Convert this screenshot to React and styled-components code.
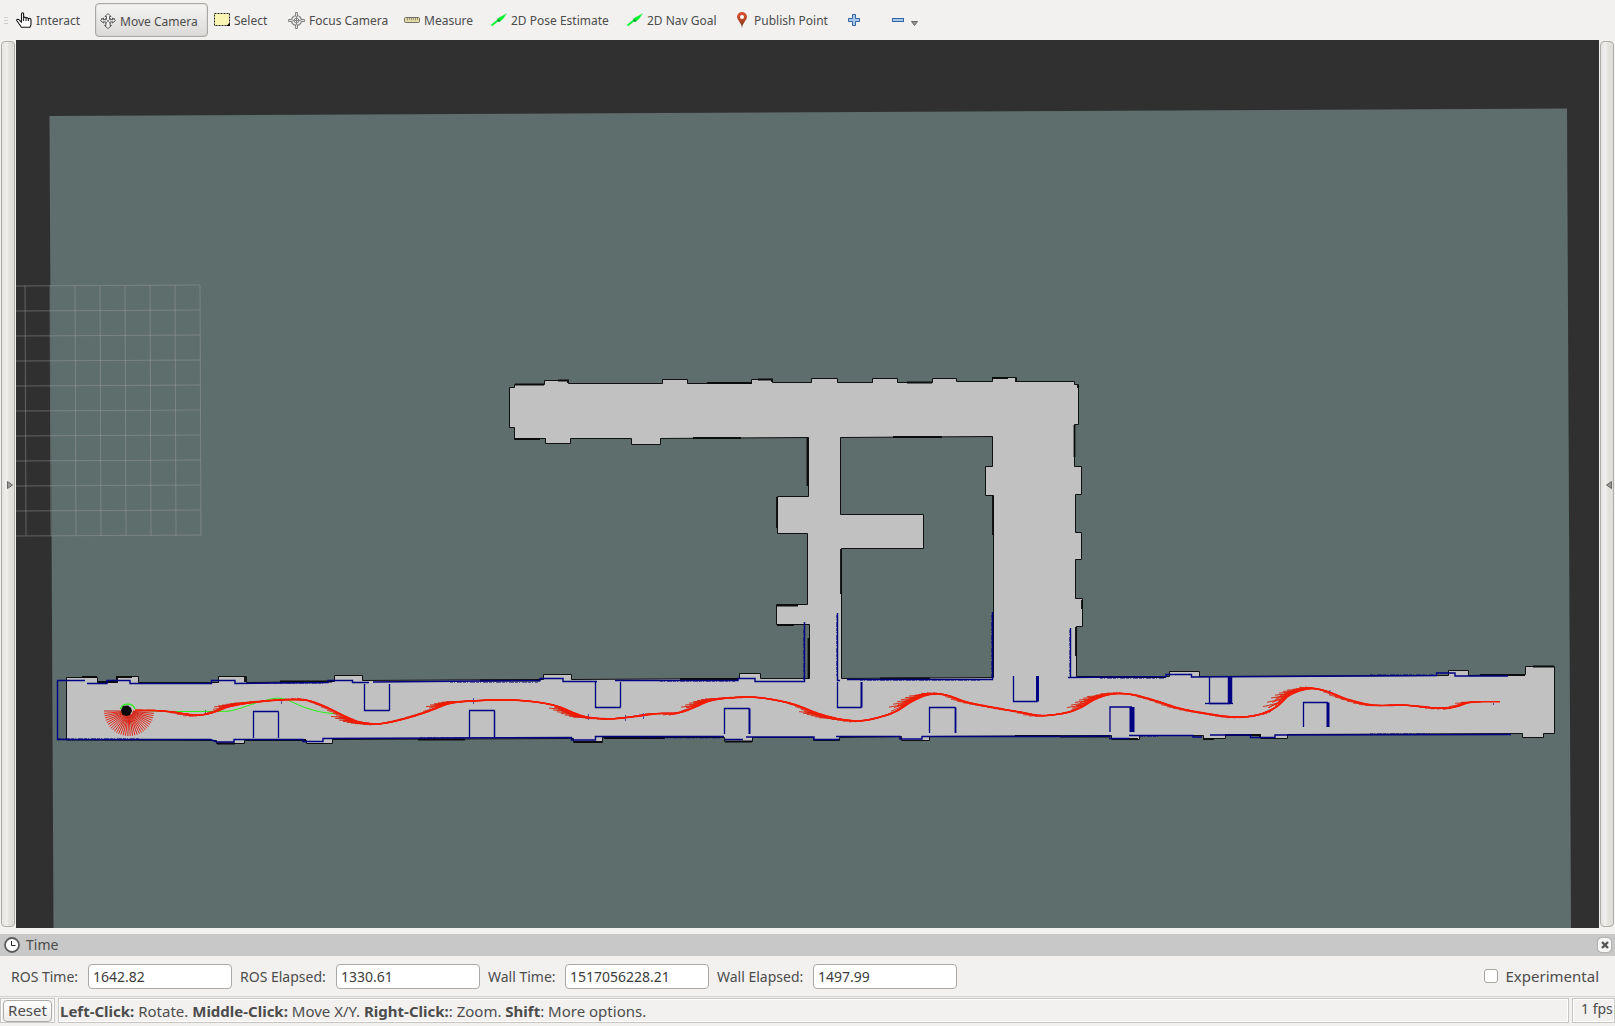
import React from "react";
import styled, { createGlobalStyle, css } from "styled-components";

const GlobalStyle = createGlobalStyle`
  *, *::before, *::after { box-sizing: border-box; }
  body {
    margin: 0;
    background: #f2f1f0;
    color: #4c4c4c;
    font-family: "Noto Sans", "Open Sans", sans-serif;
    overflow: hidden;
  }
  button, input { font: inherit; color: inherit; }
`;

const Window = styled.div`
  display: flex;
  flex-direction: column;
  height: 100vh;
`;

/* ---------- toolbar ---------- */

const Toolbar = styled.header`
  display: flex;
  align-items: center;
  height: 40px;
  flex: none;
  font-size: 12px;
`;

const Grip = styled.span`
  display: flex;
  flex-direction: column;
  gap: 2px;
  width: 11px;
  padding-left: 4px;
  &::before, &::after { content: ""; }
  i, &::before, &::after {
    width: 4px;
    height: 1px;
    background: #cfcdca;
  }
`;

const ToolButton = styled.button`
  display: flex;
  align-items: center;
  gap: 4px;
  flex: none;
  width: ${(p) => p.$width}px;
  height: 34px;
  padding: 0 4px;
  border: 1px solid transparent;
  border-radius: 4px;
  background: none;
  white-space: nowrap;
  text-align: left;
  svg { flex: none; }
  ${(p) =>
    p.$pressed &&
    css`
      padding-top: 2px;
      margin-right: 1px;
      border-color: #a9a7a2;
      background: linear-gradient(#f5f5f4, #dbdad8);
      box-shadow: inset 0 0 2px #c4c2be;
    `}
`;

/* ---------- viewport ---------- */

const Workspace = styled.main`
  display: flex;
  flex: 1;
  min-height: 0;
`;

const PanelHandle = styled.button`
  display: flex;
  align-items: center;
  justify-content: flex-end;
  flex: none;
  width: 14px;
  margin: 1px;
  padding: 2px 1px 0;
  border: 1px solid #aeaca6;
  border-radius: 4px;
  background: linear-gradient(90deg, #e4e3e1, #f0efed 40%, #e2e1db 60%, #dfded8);
`;

const Viewport = styled.div`
  flex: 1;
  min-width: 0;
  background: #303030;
  svg { display: block; width: 100%; height: 100%; }
`;

/* ---------- time dock ---------- */

const Dock = styled.section`
  flex: none;
  margin-top: 6px;
`;

const DockTitle = styled.div`
  display: flex;
  align-items: center;
  gap: 6px;
  height: 22px;
  padding: 0 4px;
  background: #c8c8c8;
  h2 { flex: 1; margin: 0; font-size: 14px; font-weight: 400; line-height: 22px; }
`;

const CloseButton = styled.button`
  display: flex;
  align-items: center;
  justify-content: center;
  width: 13px;
  height: 14px;
  padding: 0;
  border: 1px solid #fafafa;
  border-radius: 4px;
  background: #f4f4f3;
  box-shadow: 0 0 1px 1px #b0aeab;
`;

const Fields = styled.div`
  display: flex;
  align-items: center;
  gap: 8px;
  height: 40px;
  padding: 0 16px 0 11px;
  font-size: 14px;
`;

const Label = styled.label`
  flex: none;
  width: ${(p) => p.$width}px;
  white-space: nowrap;
`;

const Field = styled.input`
  width: 144px;
  height: 25px;
  padding: 0 4px;
  border: 1px solid #aba9a4;
  border-radius: 4px;
  background: #fff;
  color: #3c3c3c;
  font-size: 14px;
`;

const CheckLabel = styled.label`
  display: flex;
  align-items: center;
  gap: 8px;
  margin-left: auto;
  font-size: 15px;
`;

const Check = styled.input`
  appearance: none;
  width: 14px;
  height: 14px;
  margin: 0;
  border: 1px solid #a5a39e;
  border-radius: 3px;
  background: #fff;
`;

/* ---------- status bar ---------- */

const StatusBar = styled.footer`
  display: flex;
  gap: 3px;
  flex: none;
  height: 30px;
  padding: 1px 0 3px;
  border-top: 1px solid #d3d1ce;
  font-size: 15px;
`;

const Cell = styled.div`
  display: flex;
  align-items: center;
  flex: ${(p) => (p.$grow ? "1" : "none")};
  min-width: 0;
  border: 1px solid #c8c6c3;
  box-shadow: inset -1px -1px #fff, inset 1px 1px #fff;
  padding: ${(p) => (p.$grow ? "0 1px" : "0 2px")};
  white-space: nowrap;
  overflow: hidden;
  p { margin: 0; }
`;

const Fps = styled(Cell)`
  width: 43px;
  align-items: flex-start;
  padding: 0 0 0 8px;
  font-size: 14px;
  line-height: 19px;
`;

const ResetButton = styled.button`
  width: 49px;
  height: 22px;
  padding: 0;
  border: 1px solid #aeaca8;
  border-radius: 4px;
  background: linear-gradient(#fff, #ecebe9);
  line-height: 19px;
`;

/* ---------- icons ---------- */

const Icon = ({ children, w = 16, h = 16 }) => (
  <svg width={w} height={h} viewBox={`0 0 ${w} ${h}`} aria-hidden="true">
    {children}
  </svg>
);

const HandIcon = () => (
  <Icon>
    <path
      d="M5.5 9V2.2Q5.5.8 6.6.8T7.6 2.2V6Q8 5 9 5.2T10 6.4Q10.5 5.4 11.4 5.7T12.3 7Q13 6 14 6.4T15 8V12.5L14 15.2H5.5L3.2 12 .9 8.8Q.3 7.4 1.8 7.2 3 7.2 4 8.8L5.5 10Z"
      fill="#fff" stroke="#161616" strokeWidth="1.1"
    />
    <path d="M7.6 6V9M10 6.5V9M12.4 7V9" stroke="#161616" fill="none" />
  </Icon>
);

const MoveIcon = () => (
  <Icon>
    <path
      d="M8 .5 11 3.5H9.5V6L12.5 7V5L15.5 7.5 12.5 10V8.8L10 9V12.5H11.5L8 15.5 4.5 12.5H6V9L3.5 8.8V10L.5 7.5 3.5 5V7L6.5 6V3.5H5Z"
      fill="#f4f4f4" stroke="#555" strokeWidth="1"
    />
    <path d="M1 5.5 6 7M15 5.5 10 7M5 5 8 8 11 5M5 11 8 8 11 11" fill="none" stroke="#666" strokeWidth=".8" />
  </Icon>
);

const SelectIcon = () => (
  <Icon>
    <rect x=".5" y="1.5" width="15" height="12" fill="#fbf5b4" stroke="#222" strokeDasharray="2 1" />
    <path d="M15.8 10.5V14H12.5Z" fill="#000" />
  </Icon>
);

const FocusIcon = () => (
  <Icon w={17} h={17}>
    <g fill="none" stroke="#858585">
      <circle cx="8.5" cy="8.5" r="5" strokeWidth="1.2" />
      <circle cx="8.5" cy="8.5" r="2.4" />
      <path d="M8.5 5V12M5 8.5H12" />
      <path d="M7.5.5H9.5V4L8.5 5 7.5 4ZM7.5 16.5H9.5V13L8.5 12 7.5 13ZM.5 7.5V9.5H4L5 8.5 4 7.5ZM16.5 7.5V9.5H13L12 8.5 13 7.5Z" fill="#ddd" />
    </g>
  </Icon>
);

const RulerIcon = () => (
  <Icon>
    <rect x=".5" y="5.5" width="15" height="5" rx="1" fill="#e4dca6" stroke="#716d62" />
    <path d="M3.5 6V8.5M5.5 6V8M7.5 6V8.5M9.5 6V8M11.5 6V8.5M13.5 6V8" stroke="#85806c" strokeWidth=".8" />
  </Icon>
);

const ArrowIcon = () => (
  <Icon>
    <path d="M.5 13.5 7 8.2" stroke="#00f32c" strokeWidth="1.8" />
    <path d="M16 1.2 12 7 8.5 9.8 6.4 6.6Z" fill="#00f32c" />
    <path d="M6 6.5 10 9.2 7.2 9.8Z" fill="#078a1b" />
  </Icon>
);

const PinIcon = () => (
  <Icon w={14}>
    <defs>
      <linearGradient id="pin" x1="0" y1="0" x2="0" y2="1">
        <stop offset="0" stopColor="#df4e30" />
        <stop offset=".55" stopColor="#b34526" />
        <stop offset="1" stopColor="#4c3016" />
      </linearGradient>
    </defs>
    <path d="M6 16Q6 13 3.5 10T1 5A5 5 0 0 1 11 5Q11 7 8.500 10T6 16Z" fill="url(#pin)" />
    <circle cx="6" cy="5" r="2" fill="#fff" />
  </Icon>
);

const PlusIcon = () => (
  <Icon w={12} h={12}>
    <path d="M4.5.5H7.5V4.5H11.5V7.5H7.5V11.5H4.5V7.5H.5V4.5H4.5Z" fill="#a9c8ec" stroke="#3465a4" />
  </Icon>
);

const MinusIcon = () => (
  <Icon w={27} h={12}>
    <rect x=".5" y="4.5" width="11" height="3" fill="#a9c8ec" stroke="#3465a4" />
    <path d="M19.5 7.5H25.5L22.5 11.5Z" fill="#999" stroke="#666" />
  </Icon>
);

const ClockIcon = () => (
  <Icon>
    <circle cx="8" cy="8" r="7" fill="#fff" stroke="#5c5c5c" strokeWidth="1.8" />
    <path d="M7.5 4V8.5H11.5" fill="none" stroke="#222" />
  </Icon>
);

const TOOLS = [
  { name: "Interact", icon: HandIcon, width: 84 },
  { name: "Move Camera", icon: MoveIcon, width: 113, pressed: true },
  { name: "Select", icon: SelectIcon, width: 74 },
  { name: "Focus Camera", icon: FocusIcon, width: 116 },
  { name: "Measure", icon: RulerIcon, width: 87 },
  { name: "2D Pose Estimate", icon: ArrowIcon, width: 136 },
  { name: "2D Nav Goal", icon: ArrowIcon, width: 109 },
  { name: "Publish Point", icon: PinIcon, width: 112 },
  { label: "Add tool", icon: PlusIcon, width: 44 },
  { label: "Remove tool", icon: MinusIcon, width: 37 },
];

/* ---------- map scene ---------- */

const FLOOR =
  "M66.5 740V677.5H97.5V682.5H116.5V676.5H138.5V682.5H218.5V676.5H246.5V682.5L334.5 681.5V675.5H362.5V680.5L543.5 679.5V674.5H571.5V679.5L739.5 678.5V673.5H760.5V678.5H809.5V624.5H776.5V604.5H807.5V533.5H777.5V496.5H808.5V437.5L660.5 438.5V444.5H631.5V438.5H570.5V443.5H545.5V438.5H514.5V427.5H509.5V387.5H514.5V384.5H544.5V380.5H568.5V383.5H662.5V379.5H687.5V383.5H751.5V379.5H772.5V382.5H811.5V378.5H837.5V382.5H872.5V378.5H897.5V382.5H932.5V378.5H956.5V381.5H992.5V377.5H1016.5V381.5H1074.5V384.5H1078.5V424.5H1074.5V466.5H1081.5V494.5H1075.5V532.5H1081.5V559.5H1075.5V598.5H1082.5V626.5H1076.5V676.5H1169.5V671.5H1199.5V676.5L1448.5 675.5V670.5H1468.5V675.5L1525.5 674.5V666.5H1554.5V733.5H1543.5V737.5H1522.5V733.5L1287.5 734.5V738.5H1260.5V734.5H1225.5V738.5H1203.5V735.5H1139.5V739.5H1111.5V735.5L929.5 736.5V740.5H901.5V736.5L839.5 737.5V740.5H813.5V737.5H752.5V741.5H724.5V737.5H602.5V742.5H573.5V738.5L332.5 739.5V743.5H306.5V740.5H244.5V743.5H216.5V740.5Z" +
  "M840.5 437.5 992.5 436.5V466.5H985.5V495.5H993.5V677.5L841.5 678.5V548.5H923.5V514.5H840.5Z";

const THICK_WALLS =
  "M82 677H97M98 682H117V677H132M245 677V682M280 681.5H332M480 680.5H540M680 679H738M808.5 638V678M777 605.5H798M777 625H794M777 497V528M807.5 438V486M693 438H741M893 437H942M514 439H540M515 384.5H544M558 380.5H568V383M707 383H752M758 379.5H772V382M907 382.5H932M992 378H1008M1016 378V382M1074.5 425V457M1078 385V388M993 496V535M841 549V594M1082 600V609M1076 627V656M1080 677H1166M1480 675H1525M1533 666.5H1554M1112 739H1138M1060 736.5H1110M604 738H665M574 742H602M725 741.5H752M245 740H306M418 739.5H465M217 743.5H235M1015 736H1060M1225 735H1260V738M880 678.5H930M1203 739H1214";

const SCANS =
  "M85 680.5H57.5V739.5H210.5L217 742H234V739.5H303V741.5H323V738.5L571.5 737.5V740H595.5V736.5H724M725 739.5H743M746 737H814V739.5H839M836 736.5H900V739H922V736.5H1060L1111 736M1109 738.5H1129M1129 735.5H1193V737H1202M1210 735H1250.5V737.5H1275V735L1511 734.5" +
  "M87 683.5H107V680.5H130V683.5H211.5V680.5H235V683.5L328 682.5V680.5H352.5V682.5H369M373 682 540 680.5V678.5H563V681.5H597M615 680.5H738V678.5H755V681.5H804.5V622M837.5 613V680.5H840M847 679.5H992.5V612M1070.5 628V677.5M1068 677.5 1166 676.5V674.5H1191.5V677L1436.5 675.5V673H1455V676H1508";

const SCAN_NOISE =
  "M58 738.500H140M240 683.5H325M450 682.5H538M660 681.5H735M803.500 630V680M836.500 615V676M991.500 615V678M1069.500 630V676M1100 678.5H1165M1370 674.5H1435M1370 733.5H1430M1140 736.5H1160M860 680.5H980M420 737.5H560M640 738H720";

// [left, right, closed edge y, open edge y, right wall thickness]
const OBSTACLES = [
  [253.5, 278.5, 711.5, 738, 1.3],
  [364.5, 389.5, 710.5, 684, 1.3],
  [469.5, 494.5, 710.5, 737, 1.5],
  [595.5, 620.5, 707.5, 682, 1.3],
  [724.5, 749.5, 708.5, 734, 2],
  [837.5, 861.5, 707.5, 682, 2],
  [929.5, 955.5, 707.5, 733, 1.8],
  [1013.5, 1037.5, 701.5, 676, 3],
  [1110, 1132, 707, 732, 5],
  [1209.5, 1230, 703.5, 677, 4.5],
  [1303.5, 1328, 702.5, 727, 3],
];

const TRAIL = [
  [135, 710], [155, 710.5], [173, 712], [197, 715], [213, 712.5], [230, 706.5], [257, 702],
  [290, 699.7], [310, 701], [327, 707.3], [347, 717], [360, 722], [380, 723.7], [403, 719.3],
  [427, 712], [450, 703.5], [473, 701], [510, 700], [540, 702.5], [560, 707], [577, 714],
  [590, 717.5], [613, 718.7], [637, 716.3], [657, 713.7], [680, 712.5], [693, 708], [710, 701],
  [730, 698], [760, 697.7], [793, 704], [820, 714], [840, 719], [860, 720.7], [877, 718],
  [897, 711], [913, 701], [930, 694.5], [947, 695.3], [967, 702], [993, 707.3], [1020, 712],
  [1043, 715.5], [1067, 712.5], [1080, 708], [1097, 698.5], [1113, 694], [1133, 694.7],
  [1157, 701], [1180, 708.3], [1210, 714], [1237, 717], [1260, 714.3], [1277, 706.5],
  [1290, 695], [1310, 688.7], [1327, 691.3], [1347, 699], [1373, 705], [1407, 705.3],
  [1440, 708], [1457, 706.5], [1470, 702.5], [1500, 701.7],
];

function trailAt(x) {
  let i = 1;
  while (i < TRAIL.length - 1 && TRAIL[i][0] < x) i++;
  const slope = (k) => {
    const a = TRAIL[Math.max(k - 1, 0)];
    const b = TRAIL[Math.min(k + 1, TRAIL.length - 1)];
    return (b[1] - a[1]) / (b[0] - a[0]);
  };
  const [x0, y0] = TRAIL[i - 1];
  const [x1, y1] = TRAIL[i];
  const h = x1 - x0;
  const t = (x - x0) / h;
  const t2 = t * t;
  const t3 = t2 * t;
  return (
    (2 * t3 - 3 * t2 + 1) * y0 + (t3 - 2 * t2 + t) * h * slope(i - 1) +
    (3 * t2 - 2 * t3) * y1 + (t3 - t2) * h * slope(i)
  );
}

function poseArrows(from, to, step, length, damping) {
  let d = "";
  for (let x = from; x <= to; x += step) {
    const y = trailAt(x);
    const slope = (trailAt(x + 4) - trailAt(x - 4)) / 8;
    d += `M${x} ${y.toFixed(1)}L${x - length} ${(y - slope * damping * length).toFixed(1)}`;
  }
  return d;
}

// Stretches where the robot was turning and the arrows spread apart.
const TURNS = [
  [233, 255], [350, 374], [445, 465], [568, 592], [700, 724],
  [818, 840], [908, 930], [1086, 1108], [1282, 1308],
];

const trailLine =
  "M" + Array.from({ length: 456 }, (_, i) => `${135 + i * 3} ${trailAt(135 + i * 3).toFixed(1)}`).join("L");

const fan = (offset) =>
  Array.from({ length: 17 }, (_, i) => {
    const a = ((i * 2 + offset) / 33) * Math.PI;
    const c = Math.cos(a);
    const s = Math.sin(a);
    return `M${(129 + c * 4).toFixed(1)} ${(711 + s * 4).toFixed(1)}L${(129 + c * 25).toFixed(1)} ${(711 + s * 25).toFixed(1)}`;
  }).join("");

const GRID =
  Array.from({ length: 8 }, (_, i) => `M${25 + i * 25} 285.5L${26 + i * 25} 535.5`).join("") +
  Array.from({ length: 11 }, (_, i) => `M16 ${286 + i * 25}L${200 + i / 10} ${285 + i * 25}`).join("");

const MapScene = () => (
  <svg viewBox="16 40 1583 888" preserveAspectRatio="xMidYMid slice" role="img" aria-label="Robot map">
    <path d="M49.5 116 1567 108.5 1571 928H53.5Z" fill="#5e6e6c" />
    <path d={GRID} fill="none" stroke="#a0a0a4" strokeOpacity=".45" />
    <path d={FLOOR} fill="#c1c1c1" fillRule="evenodd" stroke="#101010" />
    <path d={THICK_WALLS} fill="none" stroke="#0c0c0c" strokeWidth="1.8" />
    <g fill="none" stroke="#000082">
      <path d={SCANS} strokeWidth="1.4" />
      <path d={SCAN_NOISE} strokeDasharray="3 1 1 2 5 1" strokeOpacity=".5" />
      {OBSTACLES.map(([l, r, y, open, w]) => (
        <g key={l}>
          <path d={`M${l} ${open}V${y}H${r}`} strokeWidth="1.3" />
          <path d={`M${r} ${y}V${open}`} strokeWidth={w} />
        </g>
      ))}
      <path d="M1205 703.5H1233" strokeWidth="1.3" />
      <path d="M281.5 700V704M473.5 698V704M205.5 710V713M588.5 714V720M625.5 715V721M643.5 713V719M1493.5 703V705M1330 690V695" strokeOpacity=".6" />
    </g>
    <path
      d="M135 710C160 712 190 711.5 227 711.3C240 710 252 703 267 700C276 697 284 698 290 701C300 706 315 713 337 713.7"
      fill="none" stroke="#27f014"
    />
    <path d="M120.5 709A7.5 6.5 0 0 1 135 709" fill="none" stroke="#27f014" strokeWidth="1.2" />
    <g fill="none">
      {TURNS.map(([from, to]) => (
        <g key={from}>
          <path d={poseArrows(from, to, 4, 19, 0.25)} stroke="#d32008" strokeWidth=".9" />
          <path d={poseArrows(from + 2, to + 10, 4, 16, 0.5)} stroke="#f51b02" strokeWidth=".9" />
        </g>
      ))}
      <path d={poseArrows(165, 1484, 6, 18, 0.7)} stroke="#d81c05" strokeWidth=".8" />
      <path d={poseArrows(165, 1484, 3, 12, 0.85)} stroke="#f51b02" />
      <path d={trailLine} stroke="#f51b02" strokeWidth="1.6" />
      <path d={fan(0)} stroke="#f22010" />
      <path d={fan(1)} stroke="#c9281b" />
    </g>
    <path d="M123 706 128 705.5 131 708 132 711 130 715 126 716 122 714.5 121 710Z" fill="#080808" />
  </svg>
);

const TIMES = [
  { id: "ros-time", label: "ROS Time:", value: "1642.82", width: 69 },
  { id: "ros-elapsed", label: "ROS Elapsed:", value: "1330.61", width: 88 },
  { id: "wall-time", label: "Wall Time:", value: "1517056228.21", width: 69 },
  { id: "wall-elapsed", label: "Wall Elapsed:", value: "1497.99", width: 88 },
];

export default function App() {
  return (
    <Window>
      <GlobalStyle />
      <Toolbar>
        <Grip><i /></Grip>
        {TOOLS.map(({ name, label, icon: Glyph, width, pressed }) => (
          <ToolButton key={name || label} type="button" aria-label={label} $width={width} $pressed={pressed}>
            <Glyph />
            {name}
          </ToolButton>
        ))}
      </Toolbar>
      <Workspace>
        <PanelHandle type="button" aria-label="Show left panel">
          <Icon w={6} h={8}><path d="M.5 .5V7.5L5.5 4Z" fill="#999" stroke="#666" /></Icon>
        </PanelHandle>
        <Viewport><MapScene /></Viewport>
        <PanelHandle type="button" aria-label="Show right panel">
          <Icon w={6} h={8}><path d="M5.5 .5V7.5L.5 4Z" fill="#999" stroke="#666" /></Icon>
        </PanelHandle>
      </Workspace>
      <Dock>
        <DockTitle>
          <ClockIcon />
          <h2>Time</h2>
          <CloseButton type="button" aria-label="Close">
            <Icon w={8} h={8}><path d="M1 1 7 7M7 1 1 7" stroke="#555" strokeWidth="2.4" /></Icon>
          </CloseButton>
        </DockTitle>
        <Fields>
          {TIMES.map((t) => (
            <React.Fragment key={t.id}>
              <Label htmlFor={t.id} $width={t.width}>{t.label}</Label>
              <Field id={t.id} type="text" defaultValue={t.value} />
            </React.Fragment>
          ))}
          <CheckLabel>
            <Check type="checkbox" />
            Experimental
          </CheckLabel>
        </Fields>
      </Dock>
      <StatusBar>
        <Cell><ResetButton type="button">Reset</ResetButton></Cell>
        <Cell $grow>
          <p>
            <b>Left-Click:</b> Rotate. <b>Middle-Click:</b> Move X/Y. <b>Right-Click:</b>: Zoom. <b>Shift</b>: More options.
          </p>
        </Cell>
        <Fps>1 fps</Fps>
      </StatusBar>
    </Window>
  );
}
